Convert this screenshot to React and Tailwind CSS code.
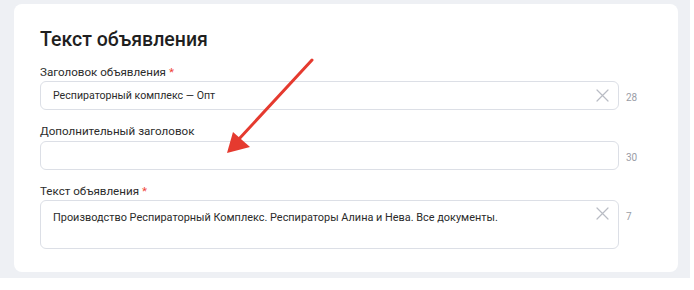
import React from "react";

const Cross = ({ className }) => (
    <svg className={className} width="13" height="13" viewBox="0 0 13 13" fill="none">
        <path d="M1 1L12 12M12 1L1 12" stroke="#b9bcc4" strokeWidth="1.2" strokeLinecap="round" />
    </svg>
);

const Label = ({ children, required }) => (
    <div className="text-[11.6px] leading-[15px] text-[#2b2b2b]">
        {children}
        {required && <span className="text-[#f04438] ml-[3px]">*</span>}
    </div>
);

const Field = ({ value, count, tall }) => (
    <div className="flex items-start">
        <div
            className={`relative w-[579px] rounded-[6px] border border-[#dcdfe6] bg-white ${
                tall ? "h-[49px]" : "h-[29px]"
            }`}
        >
            <div
                className={`pl-[12px] pr-[40px] text-[#2b2b2b] ${
                    tall ? "pt-[9px] leading-[16px] text-[10.9px]" : "leading-[27px] text-[10.6px]"
                }`}
            >
                {value}
            </div>
            {value && (
                <Cross className={`absolute right-[9px] ${tall ? "top-[6px]" : "top-[7px]"}`} />
            )}
        </div>
        <div
            className={`ml-[7px] text-[10px] text-[#9a9da6] ${
                tall ? "pt-[9px]" : "leading-[29px] pt-[2px]"
            }`}
        >
            {count}
        </div>
    </div>
);

export default function App() {
    return (
        <div className="w-[694px] h-[290px] bg-white font-['Roboto',sans-serif]">
            <div className="w-[690px] h-[278px] bg-[#eef0f4] pt-[4px] pl-[14px]">
                <div className="relative w-[664px] h-[268px] rounded-[8px] bg-white pl-[26px] pt-[22px]">
                    <h2 className="text-[19.5px] leading-[28px] font-medium text-[#1f1f1f]">
                        Текст объявления
                    </h2>
                    <div className="mt-[11px]">
                        <Label required>Заголовок объявления</Label>
                        <div className="mt-[1px]">
                            <Field value="Респираторный комплекс — Опт" count="28" />
                        </div>
                    </div>
                    <div className="mt-[12px]">
                        <Label>Дополнительный заголовок</Label>
                        <div className="mt-[2px]">
                            <Field value="" count="30" />
                        </div>
                    </div>
                    <div className="mt-[12px]">
                        <Label required>Текст объявления</Label>
                        <div className="mt-[1px]">
                            <Field
                                tall
                                value="Производство Респираторный Комплекс. Респираторы Алина и Нева. Все документы."
                                count="7"
                            />
                        </div>
                    </div>
                    <svg
                        className="absolute left-0 top-0 pointer-events-none"
                        width="664"
                        height="268"
                        viewBox="0 0 664 268"
                    >
                        <line x1="298" y1="56" x2="225" y2="135" stroke="#e53a2f" strokeWidth="3" strokeLinecap="round" />
                        <polygon points="213,149 219,128 236,143" fill="#e53a2f" />
                    </svg>
                </div>
            </div>
        </div>
    );
}
